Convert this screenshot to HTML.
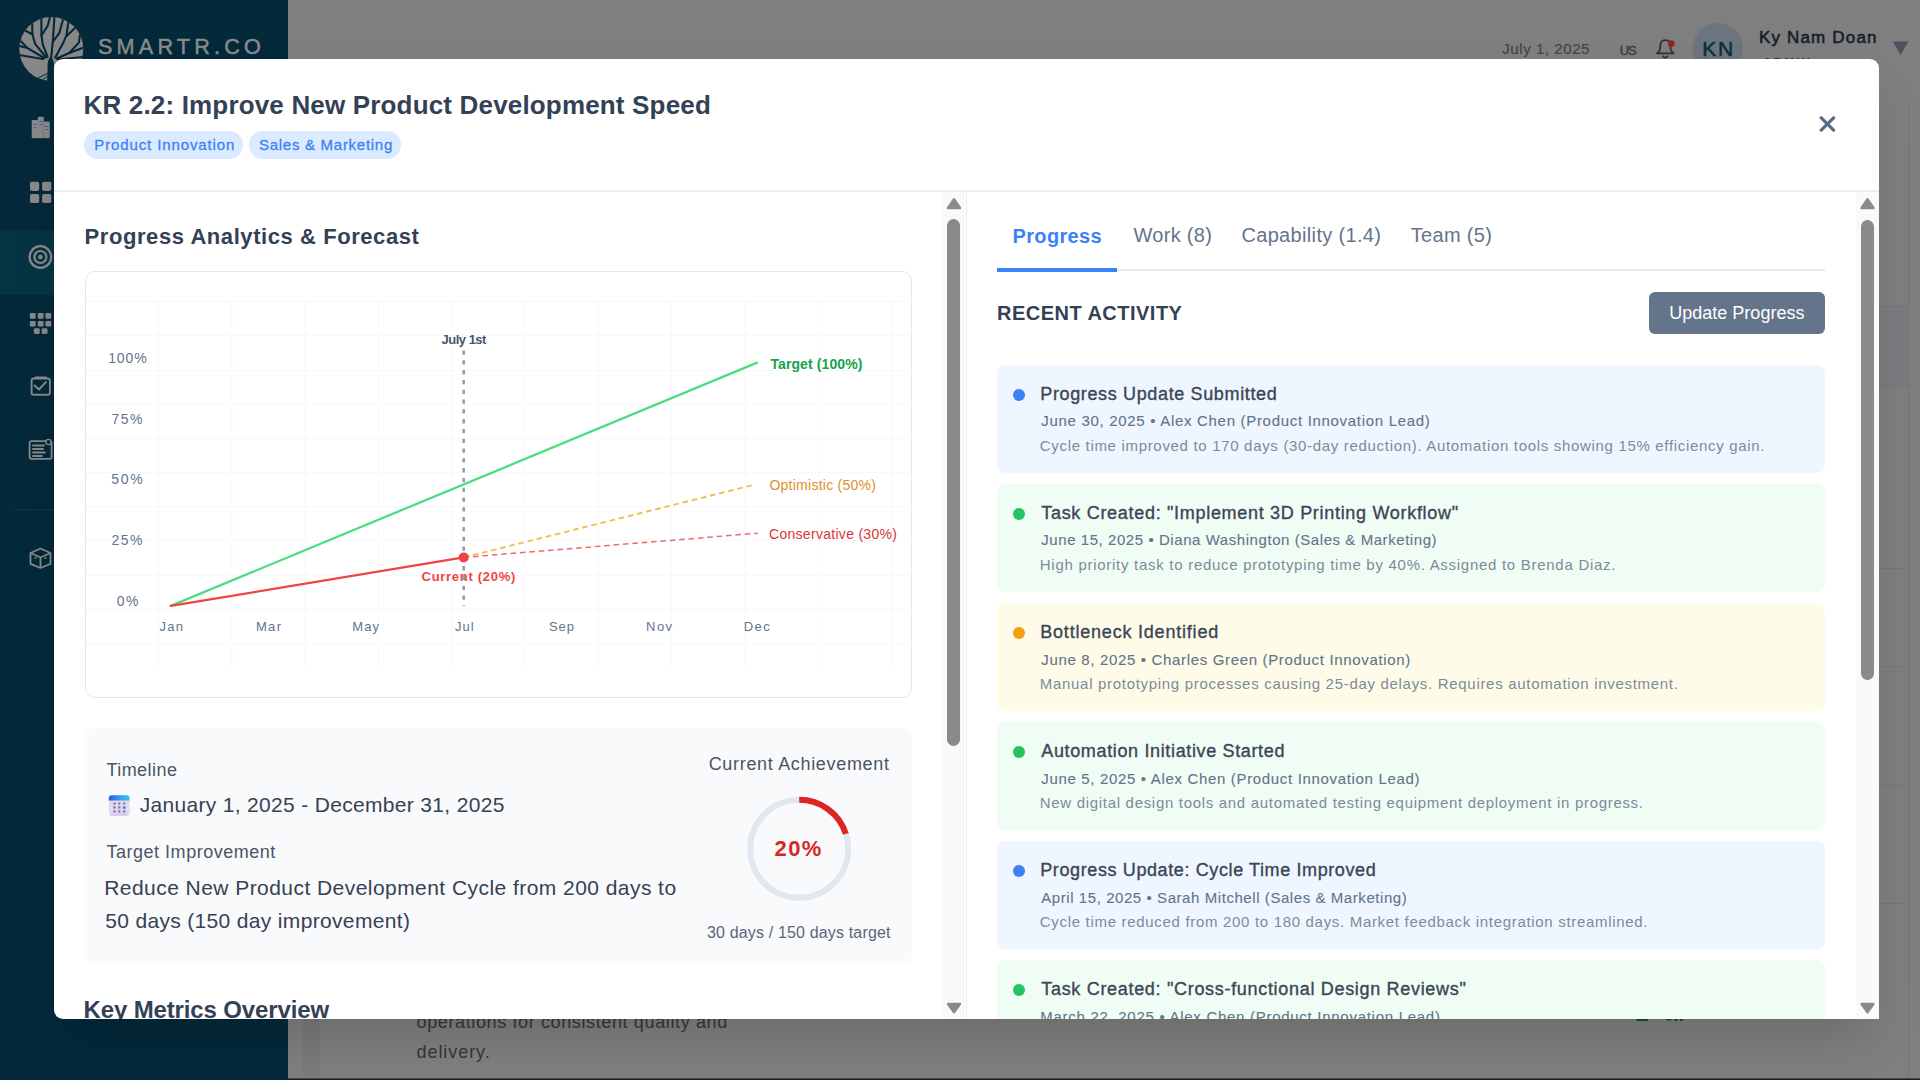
<!DOCTYPE html>
<html><head><meta charset="utf-8">
<style>
*{margin:0;padding:0;box-sizing:border-box}
html,body{width:1920px;height:1080px;overflow:hidden}
body{position:relative;background:#7f7f7f;font-family:"Liberation Sans",sans-serif}
.abs{position:absolute}
.t{position:absolute;white-space:pre;font-family:"Liberation Sans",sans-serif}
#sidebar{position:absolute;left:0;top:0;width:288px;height:1080px;background:#03293a}
#active{position:absolute;left:0;top:230px;width:288px;height:65px;background:#063445}
#modal{position:absolute;left:54px;top:59px;width:1825px;height:960px;background:#fff;border-radius:9px 9px 0 9px;box-shadow:0 25px 50px -12px rgba(0,0,0,0.18)}
#clip{position:absolute;left:0;top:0;width:1920px;height:1019px;overflow:hidden}
.card{position:absolute;left:997px;width:828px;height:108px;border-radius:8px}
.dot{position:absolute;left:1013px;width:12px;height:12px;border-radius:50%}
</style></head><body>
<!-- background page -->
<svg class="abs" style="left:0;top:0" width="1920" height="1080" viewBox="0 0 1920 1080">
  <rect x="288" y="100" width="1632" height="980" fill="#7f7f7f"/>
  <rect x="1879" y="306.5" width="30" height="80" fill="#7a7c80"/>
  <g stroke="#75777b" stroke-width="1">
    <line x1="1879" y1="306.5" x2="1909" y2="306.5"/>
    <line x1="1879" y1="386.5" x2="1909" y2="386.5"/>
    <line x1="1879" y1="568.5" x2="1909" y2="568.5"/>
    <line x1="1879" y1="666.5" x2="1909" y2="666.5"/>
    <line x1="1879" y1="785.5" x2="1909" y2="785.5"/>
    <line x1="1879" y1="903.5" x2="1909" y2="903.5"/>
    <line x1="1909" y1="100" x2="1909" y2="1080"/>
    <rect x="303" y="1019" width="15" height="60" fill="#7a7a7a" stroke="none"/>
    <line x1="318.5" y1="1019" x2="318.5" y2="1078" stroke="#75777b"/>
  </g>
  <g fill="#0d5526">
    <rect x="1636.5" y="1019" width="11.5" height="2"/>
    <path d="M1665.5 1019 Q1669 1022.5 1672.3 1019 Z"/>
    <rect x="1674.5" y="1019" width="3" height="2"/><rect x="1679.8" y="1019" width="3" height="2"/>
  </g>
  <!-- avatar -->
  <circle cx="1717.8" cy="48" r="25" fill="#6c7480"/>
  <!-- bell -->
  <g fill="none" stroke="#2b3039" stroke-width="1.7" stroke-linejoin="round" stroke-linecap="round">
    <path d="M1657 53.3 Q1660.2 51.5 1660.2 46.5 Q1660.2 40.2 1665.3 40.2 Q1670.4 40.2 1670.4 46.5 Q1670.4 51.5 1673.6 53.3 Z"/>
    <path d="M1663 56.2 Q1665.3 59 1667.6 56.2"/>
  </g>
  <circle cx="1671.2" cy="43.5" r="3.3" fill="#9b1f1f"/>
  <!-- dropdown triangle -->
  <path d="M1892.7 41.4 L1908.4 41.4 L1900.5 54.8 Z" fill="#4a505c"/>
  <!-- bottom dark line -->
  <rect x="0" y="1078.5" width="1920" height="1.5" fill="#1c1c1c"/>
</svg>
<div class="t" style="left:1502.30px;top:40.70px;font-size:15px;line-height:15px;font-weight:400;color:#42454b;letter-spacing:0.564px;-webkit-text-stroke:0.2px #42454b">July 1, 2025</div>
<div class="t" style="left:1619.80px;top:43.60px;font-size:13px;line-height:13px;font-weight:400;color:#363a42;letter-spacing:-1.100px;-webkit-text-stroke:0.35px #363a42">US</div>
<div class="t" style="left:1702.20px;top:37.90px;font-size:21px;line-height:21px;font-weight:400;color:#0b3142;letter-spacing:1.900px;-webkit-text-stroke:0.55px #0b3142">KN</div>
<div class="t" style="left:1758.90px;top:28.50px;font-size:17px;line-height:17px;font-weight:400;color:#151e2a;letter-spacing:1.180px;-webkit-text-stroke:0.55px #151e2a">Ky Nam Doan</div>
<div class="t" style="left:1763.00px;top:57.40px;font-size:12px;line-height:12px;font-weight:700;color:#2a3340;letter-spacing:1.900px">ADMIN</div>
<div class="t" style="left:416.50px;top:1013.20px;font-size:18px;line-height:18px;font-weight:400;color:#32363d;letter-spacing:0.625px">operations for consistent quality and</div>
<div class="t" style="left:416.50px;top:1042.50px;font-size:18px;line-height:18px;font-weight:400;color:#32363d;letter-spacing:0.938px">delivery.</div>

<div id="sidebar">
  <div id="active"></div>
</div>
<svg class="abs" style="left:0;top:0" width="288" height="1080" viewBox="0 0 288 1080">
  <!-- logo -->
  <defs><clipPath id="lc"><circle cx="51.3" cy="49" r="32"/></clipPath></defs>
  <circle cx="51.3" cy="49" r="32" fill="#888"/>
  <g clip-path="url(#lc)" stroke="#03293a" fill="none" stroke-linecap="round" stroke-linejoin="round">
    <g stroke-width="2.1">
    <path d="M51.1 58 L52.8 41.9 L54.6 14"/>
    <path d="M52.8 41.9 L59.4 32.8 L64.5 14"/>
    <path d="M47.6 57 L42.8 44.6 L41.4 34.9 L41.4 14"/>
    <path d="M41.4 35.6 L47.6 25.9 L50.8 14"/>
    <path d="M46.2 57.5 L35.1 43.9 L32.4 34.2 L32 14"/>
    <path d="M32.4 34.2 L22 29"/>
    <path d="M44.2 58 L27.5 48.1 L16 36"/>
    <path d="M27.5 48.1 L16 45"/>
    <path d="M43 59 L16 54.5"/>
    <path d="M55.3 57.5 L63.6 41.9 L66.4 35.6 L69.5 14"/>
    <path d="M66.4 36.3 L77 26"/>
    <path d="M56.7 58.5 L69.2 53 L78.9 42.6 L81 28"/>
    <path d="M69.2 53 L86 46.5"/>
    <path d="M58 59.5 L75.4 57.8 L86 56.5"/>
    </g>
    <g stroke-width="1">
    <path d="M48.5 73 L36 79"/><path d="M49 75 L40 82"/><path d="M50 76 L45 83"/><path d="M52 76 L56 83"/>
    </g>
  </g>
  <path d="M47.3 83 L47.6 64 Q48 59 50.8 57 Q53.5 59 54 64 L53.8 83 Z" fill="#03293a"/>
  <text x="98" y="53.6" font-family="Liberation Sans" font-size="21.6" fill="#8a8a8a" stroke="#8a8a8a" stroke-width="0.5" letter-spacing="4.2">SMARTR.CO</text>
  <!-- building -->
  <g fill="#8a8a8a">
    <rect x="31.7" y="120" width="6.4" height="18.3" rx="1.2"/>
    <rect x="37.8" y="116.7" width="6" height="21.6" rx="1.2"/>
    <rect x="43.6" y="121.5" width="6.2" height="16.8" rx="1.2"/>
  </g>
  <g fill="#3f5fa8">
    <rect x="33.5" y="124" width="3" height="1"/><rect x="33.5" y="127" width="3" height="1"/>
    <rect x="39.3" y="121" width="3" height="1"/><rect x="39.3" y="124" width="3" height="1"/>
    <rect x="45.3" y="126" width="3" height="1"/><rect x="45.3" y="129" width="3" height="1"/>
  </g>
  <!-- 2x2 grid -->
  <g fill="#8a8a8a">
    <rect x="30" y="181.7" width="9.2" height="9.2" rx="1.8"/>
    <rect x="42.1" y="181.7" width="9.2" height="9.2" rx="1.8"/>
    <rect x="30" y="193.9" width="9.2" height="9.2" rx="1.8"/>
    <rect x="42.1" y="193.9" width="9.2" height="9.2" rx="1.8"/>
  </g>
  <!-- target -->
  <g fill="none" stroke="#8a8a8a" stroke-width="2.2">
    <circle cx="40.4" cy="257" r="10.8"/>
    <circle cx="40.4" cy="257" r="6"/>
  </g>
  <circle cx="40.4" cy="257" r="2.3" fill="#8a8a8a"/>
  <!-- apps -->
  <g fill="#8a8a8a">
    <rect x="29.8" y="313.1" width="5.8" height="5.6" rx="1.2"/><rect x="37.8" y="313.1" width="5.8" height="5.6" rx="1.2"/><rect x="45.4" y="313.1" width="5.8" height="5.6" rx="1.2"/>
    <rect x="29.8" y="320.9" width="5.8" height="5.6" rx="1.2"/><rect x="37.8" y="320.9" width="5.8" height="5.6" rx="1.2"/><rect x="45.4" y="320.9" width="5.8" height="5.6" rx="1.2"/>
    <rect x="33.9" y="328.3" width="5.8" height="5.6" rx="1.2"/><rect x="41.7" y="328.3" width="5.8" height="5.6" rx="1.2"/>
  </g>
  <!-- calendar check -->
  <g fill="none" stroke="#8a8a8a" stroke-width="1.9" stroke-linecap="round" stroke-linejoin="round">
    <rect x="31.6" y="378.5" width="18.3" height="16.2" rx="2"/>
    <path d="M34.5 385.5 L39 389.5 L46 382"/>
  </g>
  <rect x="34.5" y="376.4" width="12.5" height="2.5" rx="1" fill="#8a8a8a"/>
  <!-- newspaper -->
  <g fill="none" stroke="#8a8a8a" stroke-width="1.8" stroke-linecap="round">
    <rect x="29.6" y="441.2" width="22" height="17.6" rx="2"/>
    <path d="M33 445.5 H44 M33 449 H43 M33 452.5 H45 M33 456 H42"/>
  </g>
  <circle cx="48.5" cy="442" r="2.6" fill="#03293a" stroke="#8a8a8a" stroke-width="1.4"/>
  <!-- divider -->
  <rect x="13" y="509.3" width="275" height="1" fill="#123b4a"/>
  <!-- cube -->
  <g fill="none" stroke="#8a8a8a" stroke-width="1.8" stroke-linejoin="round">
    <path d="M40.5 548.5 L50.5 553 L50.5 563.8 L40.5 568 L30.5 563.8 L30.5 553 Z"/>
    <path d="M30.5 553 L40.5 557.5 L50.5 553 M40.5 557.5 L40.5 568"/>
  </g>
  <g fill="#8a8a8a"><circle cx="35.5" cy="558" r="0.9"/><circle cx="45.5" cy="558" r="0.9"/></g>
</svg>

<div id="modal"></div>
<div id="clip">
  <!-- header divider -->
  <div class="abs" style="left:54px;top:190.2px;width:1825px;height:1.5px;background:#e8edf3"></div>
  <!-- tags -->
  <div class="abs" style="left:84.2px;top:130.8px;width:158.8px;height:28px;border-radius:14px;background:#dbeafe"></div>
  <div class="abs" style="left:248.7px;top:130.8px;width:152.8px;height:28px;border-radius:14px;background:#dbeafe"></div>
  <!-- close -->
  <svg class="abs" style="left:0;top:0" width="1920" height="1080" viewBox="0 0 1920 1080">
    <g stroke="#5b6b82" stroke-width="3.2" stroke-linecap="butt">
      <path d="M1820.2 116.8 L1834.6 131.2 M1834.6 116.8 L1820.2 131.2"/>
    </g>
  </svg>
  <!-- left scrollbar -->
  <div class="abs" style="left:942px;top:192px;width:23px;height:827px;background:#fafafa"></div>
  <div class="abs" style="left:966px;top:192px;width:1.2px;height:827px;background:#e8edf3"></div>
  <div class="abs" style="left:947px;top:219px;width:13.3px;height:527.4px;border-radius:7px;background:#8a8a8a"></div>
  <!-- right scrollbar -->
  <div class="abs" style="left:1856px;top:192px;width:23px;height:827px;background:#fafafa"></div>
  <div class="abs" style="left:1861px;top:219.5px;width:13px;height:460.5px;border-radius:7px;background:#8a8a8a"></div>
  <svg class="abs" style="left:0;top:0" width="1920" height="1080" viewBox="0 0 1920 1080">
    <g fill="#8a8a8a" stroke="#8a8a8a" stroke-width="2.4" stroke-linejoin="round">
      <path d="M948 208 L960 208 L954 199.2 Z"/>
      <path d="M948 1004 L960 1004 L954 1012.2 Z"/>
      <path d="M1861.5 208 L1873.5 208 L1867.5 199.2 Z"/>
      <path d="M1861.5 1004 L1873.5 1004 L1867.5 1012.2 Z"/>
    </g>
  </svg>

  <!-- chart card -->
  <div class="abs" style="left:84.5px;top:271px;width:827px;height:427px;border:1px solid #e2e8f0;border-radius:10px;background:#fff"></div>
  <svg class="abs" style="left:0;top:0" width="1920" height="1080" viewBox="0 0 1920 1080">
    <g stroke="#f7f8fb" stroke-width="1">
      <line x1="85.5" y1="301.5" x2="910.5" y2="301.5"/>
      <line x1="85.5" y1="335.5" x2="910.5" y2="335.5"/>
      <line x1="85.5" y1="370.5" x2="910.5" y2="370.5"/>
      <line x1="85.5" y1="404.5" x2="910.5" y2="404.5"/>
      <line x1="85.5" y1="438.5" x2="910.5" y2="438.5"/>
      <line x1="85.5" y1="472.5" x2="910.5" y2="472.5"/>
      <line x1="85.5" y1="506.5" x2="910.5" y2="506.5"/>
      <line x1="85.5" y1="540.5" x2="910.5" y2="540.5"/>
      <line x1="85.5" y1="575.5" x2="910.5" y2="575.5"/>
      <line x1="85.5" y1="609.5" x2="910.5" y2="609.5"/>
      <line x1="85.5" y1="643.5" x2="910.5" y2="643.5"/>
      <line x1="158.5" y1="301.5" x2="158.5" y2="667"/>
      <line x1="231.8" y1="301.5" x2="231.8" y2="667"/>
      <line x1="305.1" y1="301.5" x2="305.1" y2="667"/>
      <line x1="378.4" y1="301.5" x2="378.4" y2="667"/>
      <line x1="451.7" y1="301.5" x2="451.7" y2="667"/>
      <line x1="525" y1="301.5" x2="525" y2="667"/>
      <line x1="598.3" y1="301.5" x2="598.3" y2="667"/>
      <line x1="671.6" y1="301.5" x2="671.6" y2="667"/>
      <line x1="744.9" y1="301.5" x2="744.9" y2="667"/>
      <line x1="818.2" y1="301.5" x2="818.2" y2="667"/>
      <line x1="891.5" y1="301.5" x2="891.5" y2="667"/>
    </g>
    <!-- july line -->
    <line x1="463.7" y1="350.5" x2="463.7" y2="606" stroke="#909db2" stroke-width="2.6" stroke-dasharray="4.3 5.5"/>
    <!-- target line -->
    <line x1="170.8" y1="605.9" x2="757.1" y2="362.6" stroke="#4ade80" stroke-width="2.3" stroke-linecap="round"/>
    <!-- current line -->
    <line x1="170.8" y1="605.9" x2="463.7" y2="557.4" stroke="#ef4444" stroke-width="2.3" stroke-linecap="round"/>
    <!-- optimistic -->
    <line x1="463.7" y1="557.4" x2="755" y2="484.5" stroke="#f7b955" stroke-width="1.9" stroke-dasharray="5.6 3.8"/>
    <!-- conservative -->
    <line x1="463.7" y1="557.4" x2="757.8" y2="533.2" stroke="#f06a6a" stroke-width="1.5" stroke-dasharray="5.6 3.8"/>
    <circle cx="463.7" cy="557.4" r="5" fill="#ef4444"/>
  </svg>
  <!-- info card -->
  <div class="abs" style="left:84.2px;top:728.3px;width:827.5px;height:236px;border-radius:10px;background:#f8fafc"></div>
  <svg class="abs" style="left:0;top:0" width="1920" height="1080" viewBox="0 0 1920 1080">
    <circle cx="799.2" cy="848.8" r="49" fill="none" stroke="#e2e8f0" stroke-width="6"/>
    <circle cx="799.2" cy="848.8" r="49" fill="none" stroke="#dc2626" stroke-width="6" stroke-dasharray="61.58 1000" transform="rotate(-90 799.2 848.8)"/>
    <!-- calendar icon -->
    <defs><linearGradient id="calg" x1="0" y1="0" x2="1" y2="0"><stop offset="0" stop-color="#3057dc"/><stop offset="0.5" stop-color="#2f9bf5"/><stop offset="1" stop-color="#3cc3f7"/></linearGradient></defs>
    <rect x="108.8" y="795.2" width="20.8" height="20.5" rx="3" fill="#e3d8f0"/>
    <rect x="110.5" y="813.5" width="17.4" height="2.2" rx="1" fill="#dac6f0"/>
    <path d="M108.8 800.5 L108.8 798.2 Q108.8 795.2 111.8 795.2 L126.6 795.2 Q129.6 795.2 129.6 798.2 L129.6 800.5 Z" fill="url(#calg)"/>
    <g fill="#8f84a3">
      <circle cx="114.5" cy="803.6" r="1.3"/><circle cx="119.2" cy="803.6" r="1.3"/><circle cx="124.2" cy="803.6" r="1.3"/>
      <circle cx="114.5" cy="807.4" r="1.3"/><circle cx="119.2" cy="807.4" r="1.3"/>
      <circle cx="114.5" cy="811.4" r="1.3"/><circle cx="119.2" cy="811.4" r="1.3"/><circle cx="124.2" cy="811.4" r="1.3"/>
    </g>
    <circle cx="124.2" cy="807.4" r="1.5" fill="#2f8ff0"/>
  </svg>

  <!-- right pane -->
  <div class="abs" style="left:997px;top:269px;width:828px;height:2px;background:#e2e8f0"></div>
  <div class="abs" style="left:997px;top:268.2px;width:120.3px;height:3.4px;background:#3b82f6"></div>
  <div class="abs" style="left:1649.2px;top:292px;width:176px;height:41.8px;border-radius:6px;background:#64748b"></div>
<div class="card" style="top:364.70px;background:#eff6ff"></div><div class="dot" style="top:388.70px;background:#3b82f6"></div>
<div class="card" style="top:483.76px;background:#f0fdf4"></div><div class="dot" style="top:507.76px;background:#22c55e"></div>
<div class="card" style="top:602.82px;background:#fefce8"></div><div class="dot" style="top:626.82px;background:#f59e0b"></div>
<div class="card" style="top:721.88px;background:#f0fdf4"></div><div class="dot" style="top:745.88px;background:#22c55e"></div>
<div class="card" style="top:840.94px;background:#eff6ff"></div><div class="dot" style="top:864.94px;background:#3b82f6"></div>
<div class="card" style="top:960.00px;background:#f0fdf4"></div><div class="dot" style="top:984.00px;background:#22c55e"></div>
<div class="t" style="left:83.50px;top:91.70px;font-size:26px;line-height:26px;font-weight:700;color:#334155;letter-spacing:0.170px">KR 2.2: Improve New Product Development Speed</div>
<div class="t" style="left:94.30px;top:136.70px;font-size:15px;line-height:15px;font-weight:400;color:#3b82f6;letter-spacing:0.882px;-webkit-text-stroke:0.3px #3b82f6">Product Innovation</div>
<div class="t" style="left:259.00px;top:136.70px;font-size:15px;line-height:15px;font-weight:400;color:#3b82f6;letter-spacing:0.719px;-webkit-text-stroke:0.3px #3b82f6">Sales &amp; Marketing</div>
<div class="t" style="left:84.60px;top:226.00px;font-size:22px;line-height:22px;font-weight:700;color:#334155;letter-spacing:0.568px">Progress Analytics &amp; Forecast</div>
<div class="t" style="left:108.20px;top:350.80px;font-size:14px;line-height:14px;font-weight:400;color:#64748b;letter-spacing:0.867px">100%</div>
<div class="t" style="left:111.50px;top:411.90px;font-size:14px;line-height:14px;font-weight:400;color:#64748b;letter-spacing:1.500px">75%</div>
<div class="t" style="left:111.25px;top:472.20px;font-size:14px;line-height:14px;font-weight:400;color:#64748b;letter-spacing:1.750px">50%</div>
<div class="t" style="left:111.50px;top:532.70px;font-size:14px;line-height:14px;font-weight:400;color:#64748b;letter-spacing:1.500px">25%</div>
<div class="t" style="left:116.80px;top:593.60px;font-size:14px;line-height:14px;font-weight:400;color:#64748b;letter-spacing:1.400px">0%</div>
<div class="t" style="left:159.55px;top:620.10px;font-size:13px;line-height:13px;font-weight:400;color:#64748b;letter-spacing:1.250px">Jan</div>
<div class="t" style="left:255.95px;top:620.10px;font-size:13px;line-height:13px;font-weight:400;color:#64748b;letter-spacing:1.350px">Mar</div>
<div class="t" style="left:352.25px;top:620.10px;font-size:13px;line-height:13px;font-weight:400;color:#64748b;letter-spacing:1.050px">May</div>
<div class="t" style="left:454.90px;top:620.10px;font-size:13px;line-height:13px;font-weight:400;color:#64748b;letter-spacing:1.100px">Jul</div>
<div class="t" style="left:549.00px;top:620.10px;font-size:13px;line-height:13px;font-weight:400;color:#64748b;letter-spacing:0.900px">Sep</div>
<div class="t" style="left:646.05px;top:620.10px;font-size:13px;line-height:13px;font-weight:400;color:#64748b;letter-spacing:1.450px">Nov</div>
<div class="t" style="left:743.70px;top:620.10px;font-size:13px;line-height:13px;font-weight:400;color:#64748b;letter-spacing:1.500px">Dec</div>
<div class="t" style="left:441.60px;top:333.30px;font-size:13px;line-height:13px;font-weight:700;color:#475569;letter-spacing:-0.514px">July 1st</div>
<div class="t" style="left:421.60px;top:570.20px;font-size:13px;line-height:13px;font-weight:700;color:#ef4444;letter-spacing:0.708px">Current (20%)</div>
<div class="t" style="left:770.40px;top:356.80px;font-size:14px;line-height:14px;font-weight:700;color:#16a34a;letter-spacing:0.100px">Target (100%)</div>
<div class="t" style="left:769.40px;top:477.80px;font-size:14px;line-height:14px;font-weight:400;color:#dc8f2e;letter-spacing:0.260px">Optimistic (50%)</div>
<div class="t" style="left:769.00px;top:527.10px;font-size:14px;line-height:14px;font-weight:400;color:#dd3535;letter-spacing:0.294px">Conservative (30%)</div>
<div class="t" style="left:106.40px;top:761.40px;font-size:18px;line-height:18px;font-weight:400;color:#4b5563;letter-spacing:0.471px">Timeline</div>
<div class="t" style="left:139.70px;top:794.20px;font-size:21px;line-height:21px;font-weight:400;color:#374151;letter-spacing:0.321px">January 1, 2025 - December 31, 2025</div>
<div class="t" style="left:106.40px;top:843.00px;font-size:18px;line-height:18px;font-weight:400;color:#4b5563;letter-spacing:0.524px">Target Improvement</div>
<div class="t" style="left:104.20px;top:877.00px;font-size:21px;line-height:21px;font-weight:400;color:#374151;letter-spacing:0.448px">Reduce New Product Development Cycle from 200 days to</div>
<div class="t" style="left:105.20px;top:910.30px;font-size:21px;line-height:21px;font-weight:400;color:#374151;letter-spacing:0.336px">50 days (150 day improvement)</div>
<div class="t" style="left:708.70px;top:755.00px;font-size:18px;line-height:18px;font-weight:400;color:#4b5563;letter-spacing:0.678px">Current Achievement</div>
<div class="t" style="left:774.60px;top:838.00px;font-size:22px;line-height:22px;font-weight:700;color:#dc2626;letter-spacing:1.400px">20%</div>
<div class="t" style="left:707.00px;top:924.50px;font-size:16px;line-height:16px;font-weight:400;color:#5b6676;letter-spacing:0.158px">30 days / 150 days target</div>
<div class="t" style="left:83.50px;top:998.00px;font-size:24px;line-height:24px;font-weight:700;color:#334155;letter-spacing:-0.132px">Key Metrics Overview</div>
<div class="t" style="left:1012.50px;top:226.10px;font-size:20px;line-height:20px;font-weight:700;color:#3b82f6;letter-spacing:0.357px">Progress</div>
<div class="t" style="left:1133.50px;top:224.50px;font-size:20px;line-height:20px;font-weight:400;color:#64748b;letter-spacing:0.300px">Work (8)</div>
<div class="t" style="left:1241.40px;top:224.50px;font-size:20px;line-height:20px;font-weight:400;color:#64748b;letter-spacing:0.340px">Capability (1.4)</div>
<div class="t" style="left:1410.80px;top:224.50px;font-size:20px;line-height:20px;font-weight:400;color:#64748b;letter-spacing:0.314px">Team (5)</div>
<div class="t" style="left:997.00px;top:302.70px;font-size:20px;line-height:20px;font-weight:700;color:#334155;letter-spacing:0.486px">RECENT ACTIVITY</div>
<div class="t" style="left:1669.20px;top:304.20px;font-size:18px;line-height:18px;font-weight:400;color:#ffffff;letter-spacing:0.014px">Update Progress</div>
<div class="t" style="left:1040.25px;top:384.70px;font-size:18px;line-height:18px;font-weight:400;color:#3b4554;letter-spacing:0.640px;-webkit-text-stroke:0.35px #3b4554">Progress Update Submitted</div>
<div class="t" style="left:1041.25px;top:413.40px;font-size:15px;line-height:15px;font-weight:400;color:#64748b;letter-spacing:0.695px;-webkit-text-stroke:0.12px #64748b">June 30, 2025 • Alex Chen (Product Innovation Lead)</div>
<div class="t" style="left:1039.80px;top:437.90px;font-size:15px;line-height:15px;font-weight:400;color:#7d8a9c;letter-spacing:0.682px">Cycle time improved to 170 days (30-day reduction). Automation tools showing 15% efficiency gain.</div>
<div class="t" style="left:1041.25px;top:503.76px;font-size:18px;line-height:18px;font-weight:400;color:#3b4554;letter-spacing:0.694px;-webkit-text-stroke:0.35px #3b4554">Task Created: "Implement 3D Printing Workflow"</div>
<div class="t" style="left:1041.25px;top:532.46px;font-size:15px;line-height:15px;font-weight:400;color:#64748b;letter-spacing:0.564px;-webkit-text-stroke:0.12px #64748b">June 15, 2025 • Diana Washington (Sales &amp; Marketing)</div>
<div class="t" style="left:1039.80px;top:556.96px;font-size:15px;line-height:15px;font-weight:400;color:#7d8a9c;letter-spacing:0.719px">High priority task to reduce prototyping time by 40%. Assigned to Brenda Diaz.</div>
<div class="t" style="left:1040.25px;top:622.82px;font-size:18px;line-height:18px;font-weight:400;color:#3b4554;letter-spacing:0.792px;-webkit-text-stroke:0.35px #3b4554">Bottleneck Identified</div>
<div class="t" style="left:1041.25px;top:651.52px;font-size:15px;line-height:15px;font-weight:400;color:#64748b;letter-spacing:0.664px;-webkit-text-stroke:0.12px #64748b">June 8, 2025 • Charles Green (Product Innovation)</div>
<div class="t" style="left:1039.80px;top:676.02px;font-size:15px;line-height:15px;font-weight:400;color:#7d8a9c;letter-spacing:0.694px">Manual prototyping processes causing 25-day delays. Requires automation investment.</div>
<div class="t" style="left:1041.25px;top:741.88px;font-size:18px;line-height:18px;font-weight:400;color:#3b4554;letter-spacing:0.645px;-webkit-text-stroke:0.35px #3b4554">Automation Initiative Started</div>
<div class="t" style="left:1041.25px;top:770.58px;font-size:15px;line-height:15px;font-weight:400;color:#64748b;letter-spacing:0.668px;-webkit-text-stroke:0.12px #64748b">June 5, 2025 • Alex Chen (Product Innovation Lead)</div>
<div class="t" style="left:1039.80px;top:795.08px;font-size:15px;line-height:15px;font-weight:400;color:#7d8a9c;letter-spacing:0.690px">New digital design tools and automated testing equipment deployment in progress.</div>
<div class="t" style="left:1040.25px;top:860.94px;font-size:18px;line-height:18px;font-weight:400;color:#3b4554;letter-spacing:0.610px;-webkit-text-stroke:0.35px #3b4554">Progress Update: Cycle Time Improved</div>
<div class="t" style="left:1041.25px;top:889.64px;font-size:15px;line-height:15px;font-weight:400;color:#64748b;letter-spacing:0.569px;-webkit-text-stroke:0.12px #64748b">April 15, 2025 • Sarah Mitchell (Sales &amp; Marketing)</div>
<div class="t" style="left:1039.80px;top:914.14px;font-size:15px;line-height:15px;font-weight:400;color:#7d8a9c;letter-spacing:0.686px">Cycle time reduced from 200 to 180 days. Market feedback integration streamlined.</div>
<div class="t" style="left:1041.25px;top:980.00px;font-size:18px;line-height:18px;font-weight:400;color:#3b4554;letter-spacing:0.688px;-webkit-text-stroke:0.35px #3b4554">Task Created: "Cross-functional Design Reviews"</div>
<div class="t" style="left:1040.25px;top:1008.70px;font-size:15px;line-height:15px;font-weight:400;color:#64748b;letter-spacing:0.719px;-webkit-text-stroke:0.12px #64748b">March 22, 2025 • Alex Chen (Product Innovation Lead)</div>
<div class="t" style="left:1039.80px;top:1033.20px;font-size:15px;line-height:15px;font-weight:400;color:#7d8a9c;letter-spacing:0.682px">Design review process established with weekly cross-functional meetings.</div>
</div>
</body></html>
